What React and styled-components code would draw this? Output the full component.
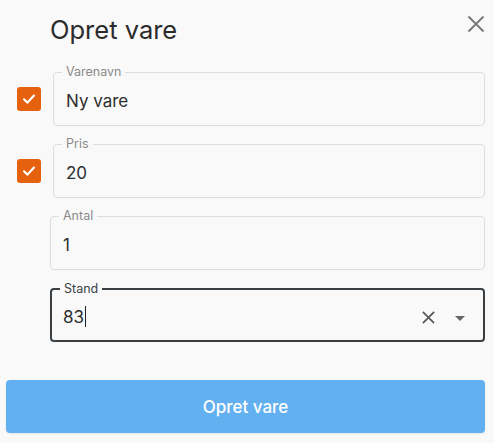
import React from "react";
import styled, { createGlobalStyle } from "styled-components";

const Global = createGlobalStyle`
  html, body {
    margin: 0;
    padding: 0;
    background: #f9f9f9;
    font-family: Inter, "Noto Sans", sans-serif;
  }
`;

const Page = styled.div`
  width: 494px;
  height: 443px;
  box-sizing: border-box;
  padding: 11px 9px 0 6px;
  display: flex;
  flex-direction: column;
`;

const Header = styled.div`
  display: flex;
  align-items: center;
  justify-content: space-between;
  height: 36px;
  padding-left: 44px;
  margin-bottom: 25px;
`;

const Title = styled.h2`
  margin: 0;
  font-size: 25.5px;
  font-weight: 400;
  color: #2b2b2b;
`;

const CloseBtn = styled.button`
  border: 0;
  background: none;
  padding: 0;
  width: 20px;
  height: 20px;
  display: flex;
  align-items: center;
  justify-content: center;
  margin-top: -11px;
  margin-right: -1px;
  cursor: pointer;
`;

const Form = styled.div`
  display: flex;
  flex-direction: column;
  gap: 18px;
`;

const Row = styled.div`
  display: flex;
  align-items: center;
  padding-left: ${(p) => (p.$check ? "11px" : "44px")};
  gap: 12px;
`;

const Check = styled.span`
  width: 24px;
  height: 24px;
  border-radius: 3px;
  background: #e5600f;
  display: flex;
  align-items: center;
  justify-content: center;
  flex-shrink: 0;
`;

const Field = styled.div`
  position: relative;
  flex: 1;
  height: 54px;
  box-sizing: border-box;
  border: ${(p) => (p.$focus ? "2px solid #3a3f44" : "1px solid #dcdcdc")};
  border-radius: 4px;
  display: flex;
  align-items: center;
  padding: 3px ${(p) => (p.$focus ? "11px" : "12px")} 0;
`;

const Label = styled.span`
  position: absolute;
  top: -8px;
  left: 8px;
  padding: 0 4px;
  background: #f9f9f9;
  font-size: 12.5px;
  line-height: 14px;
  color: ${(p) => (p.$focus ? "#3a3f44" : "#8a8a8a")};
`;

const Value = styled.span`
  flex: 1;
  font-size: 17px;
  color: #2e2e2e;
  display: flex;
  align-items: center;
`;

const Caret = styled.span`
  display: inline-block;
  width: 1px;
  height: 21px;
  background: #222;
  margin-left: 1px;
`;

const Adorn = styled.div`
  display: flex;
  align-items: center;
  gap: 18px;
  margin-right: 6px;
  margin-top: 2px;
`;

const Submit = styled.button`
  margin-top: 38px;
  height: 53px;
  border: 0;
  border-radius: 4px;
  background: #63b0f1;
  color: #fff;
  font-family: Inter, "Noto Sans", sans-serif;
  font-size: 17px;
  font-weight: 500;
  box-shadow: 0 1px 2px rgba(0, 0, 0, 0.08);
`;

const Tick = () => (
  <svg width="16" height="16" viewBox="0 0 16 16">
    <path d="M3 8.3 L6.5 11.6 L13 4.6" fill="none" stroke="#fff" strokeWidth="2.2" strokeLinecap="round" strokeLinejoin="round" />
  </svg>
);

const XIcon = ({ size, color, w }) => (
  <svg width={size} height={size} viewBox="0 0 16 16">
    <path d="M2 2 L14 14 M14 2 L2 14" stroke={color} strokeWidth={w} />
  </svg>
);

const fields = [
  { label: "Varenavn", value: "Ny vare", check: true },
  { label: "Pris", value: "20", check: true },
  { label: "Antal", value: "1" },
];

export default function App() {
  return (
    <Page>
      <Global />
      <Header>
        <Title>Opret vare</Title>
        <CloseBtn>
          <XIcon size={20} color="#7a7a7a" w={1.5} />
        </CloseBtn>
      </Header>
      <Form>
        {fields.map((f) => (
          <Row key={f.label} $check={f.check}>
            {f.check && (
              <Check>
                <Tick />
              </Check>
            )}
            <Field>
              <Label>{f.label}</Label>
              <Value>{f.value}</Value>
            </Field>
          </Row>
        ))}
        <Row>
          <Field $focus>
            <Label $focus>Stand</Label>
            <Value>
              83
              <Caret />
            </Value>
            <Adorn>
              <XIcon size={15} color="#555" w={1.7} />
              <svg width="12" height="8" viewBox="0 0 12 8">
                <path d="M1 2 L11 2 L6 7 Z" fill="#666" />
              </svg>
            </Adorn>
          </Field>
        </Row>
      </Form>
      <Submit>Opret vare</Submit>
    </Page>
  );
}
